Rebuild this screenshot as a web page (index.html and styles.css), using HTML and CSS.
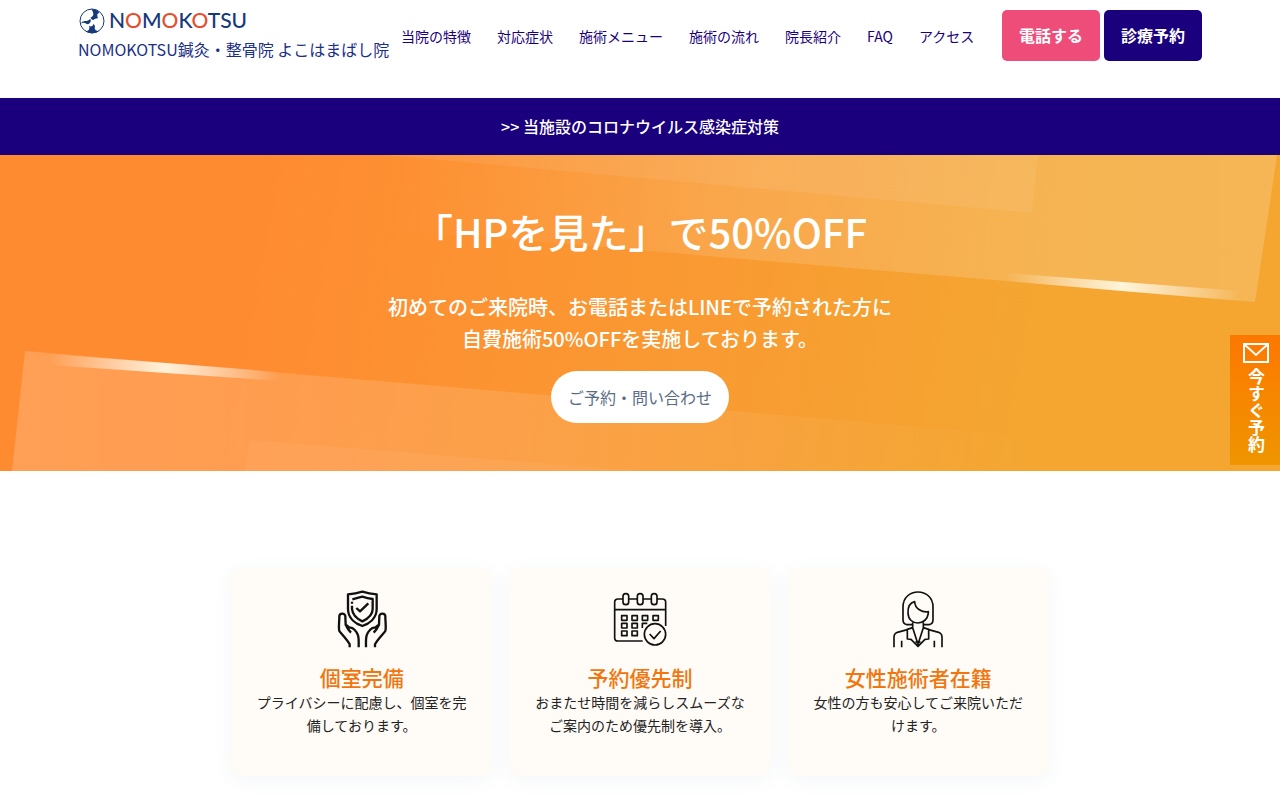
FILE: index.html
```html
<!DOCTYPE html>
<html lang="ja">
<head>
<meta charset="utf-8">
<meta name="viewport" content="width=device-width, initial-scale=1">
<title>NOMOKOTSU鍼灸・整骨院 よこはまばし院</title>
<link rel="stylesheet" href="styles.css">
</head>
<body>
<header class="header">
  <a class="brand" href="#">
    <span class="logo">
      <svg class="logo-mark" viewBox="0 0 78 78" aria-hidden="true">
        <circle cx="39" cy="39" r="36" fill="#fff" stroke="#16397c" stroke-width="3"/>
        <path fill="#16397c" d="M36 4C48 3 58 8 61 15C54 16 53 22 57 30C51 32 46 32 43 36C38 36 35 32 35 28C39 27 43 24 43 19C43 12 40 7 36 4Z"/>
        <path fill="#16397c" d="M5 48C8 42 14 38 20 39C26 40 30 36 33 33C37 35 36 40 33 44C30 48 26 50 22 47C15 43 9 44 5 48Z"/>
        <path fill="#16397c" d="M22 70C30 68 33 62 30 54C36 57 42 55 43 48C49 51 48 57 47 61C48 67 54 70 60 69C48 78 32 77 22 70Z"/>
      </svg>
      <span class="logo-text">N<i>O</i>M<i>O</i>K<i>O</i>TSU</span>
    </span>
    <span class="clinic">NOMOKOTSU鍼灸・整骨院 よこはまばし院</span>
  </a>
  <nav class="nav">
    <a href="#">当院の特徴</a>
    <a href="#">対応症状</a>
    <a href="#">施術メニュー</a>
    <a href="#">施術の流れ</a>
    <a href="#">院長紹介</a>
    <a href="#">FAQ</a>
    <a href="#">アクセス</a>
  </nav>
  <div class="actions">
    <a class="btn btn-tel" href="#">電話する</a>
    <a class="btn btn-book" href="#">診療予約</a>
  </div>
</header>

<a class="notice" href="#">&gt;&gt; 当施設のコロナウイルス感染症対策</a>

<main>
  <section class="hero">
    <svg class="hero-bg" viewBox="0 0 1280 316" preserveAspectRatio="none" aria-hidden="true">
      <defs>
        <linearGradient id="beamRight" gradientUnits="userSpaceOnUse" x1="400" y1="0" x2="1270" y2="0"><stop offset="0" stop-color="#fff" stop-opacity="0"/><stop offset=".4" stop-color="#fff" stop-opacity=".13"/><stop offset="1" stop-color="#fff" stop-opacity=".18"/></linearGradient>
        <linearGradient id="beamLeft"><stop offset="0" stop-color="#fff" stop-opacity=".18"/><stop offset=".5" stop-color="#fff" stop-opacity=".11"/><stop offset="1" stop-color="#fff" stop-opacity="0"/></linearGradient>
        <linearGradient id="glare"><stop offset="0" stop-color="#fff" stop-opacity="0"/><stop offset=".5" stop-color="#fffbe8" stop-opacity=".9"/><stop offset="1" stop-color="#fff" stop-opacity="0"/></linearGradient>
      </defs>
      <polygon fill="url(#beamRight)" points="400,0 1277,0 1255,147 400,75"/>
      <polygon fill="#fff" fill-opacity=".07" points="385,0 1038,0 1032,58"/>
      <polygon fill="url(#glare)" points="1005,118 1240,136 1240,146 1005,126"/>
      <polygon fill="url(#beamLeft)" points="25,196 1040,282 1040,316 12,316"/>
      <polygon fill="#fff" fill-opacity=".05" points="250,285 640,316 244,316"/>
      <polygon fill="url(#glare)" points="50,199 280,217 280,226 50,210"/>
    </svg>
    <h1 class="hero-title">「HPを見た」で50%OFF</h1>
    <p class="hero-lead">初めてのご来院時、お電話またはLINEで予約された方に<br>自費施術50%OFFを実施しております。</p>
    <a class="hero-btn" href="#">ご予約・問い合わせ</a>
  </section>

  <section class="features">
    <article class="card">
      <svg class="icon icon-bold" viewBox="36 29 180 174" aria-hidden="true">
        <path d="M84 42Q107 40 127 34Q147 40 170 42V86C170 114 147 130 127 137C107 130 84 114 84 86Z"/>
        <path d="M97 57Q113 53 127 49Q143 54 158 56V86C158 104 142 116 127 123C112 116 98 106 96 86V76M96 64V70"/>
        <path d="M109 83L120 93L145 69"/>
        <path d="M89 201V192C82 178 61 157 58 152C55 143 58 126 58 108C58 98 76 97 76 108L77 133C81 142 84 148 93 157M77 135C83 133 85 142 90 142C97 140 109 151 114 165C117 174 116 188 116 201"/>
        <path d="M165 201V192C172 178 193 157 196 152C199 143 196 126 196 108C196 98 178 97 178 108L177 133C173 142 170 148 161 157M177 135C171 133 169 142 164 142C157 140 145 151 140 165C137 174 138 188 138 201"/>
      </svg>
      <h2>個室完備</h2>
      <p>プライバシーに配慮し、個室を完備しております。</p>
    </article>
    <article class="card">
      <svg class="icon" viewBox="45 29 180 174" aria-hidden="true">
        <path d="M84 56H69Q59 56 59 66V172Q59 182 69 182H143M102 56H126M144 56H168M186 56H202Q212 56 212 66V137M59 88H212"/>
        <rect x="84" y="40" width="17" height="33" rx="8"/><rect x="127" y="40" width="17" height="33" rx="8"/><rect x="169" y="40" width="17" height="33" rx="8"/>
        <path d="M80 106H96V120H80ZM111 106H127V120H111ZM142 106H158V120H142ZM174 106H190V120H174ZM80 129H96V143H80ZM111 129H127V143H111ZM157 129H142V143M80 152H96V166H80ZM111 152H127V166H111Z"/>
        <circle cx="180" cy="162" r="32"/><path d="M164 161L177 175L197 152"/>
      </svg>
      <h2>予約優先制</h2>
      <p>おまたせ時間を減らしスムーズなご案内のため優先制を導入。</p>
    </article>
    <article class="card">
      <svg class="icon" viewBox="51 29 180 174" aria-hidden="true">
        <path d="M124 133H108Q96 131 96 119V80C96 20 186 20 186 80V119Q186 131 174 133H158"/>
        <path d="M131 64C115 68 110 79 111 98C112 138 168 138 172 98V94C154 97 132 86 131 64Z"/>
        <path d="M125 126V142L141 192L157 142V126M125 142L109 147V176L120 177L141 198L162 177L173 176V147L157 142M134 183L141 189L148 183"/>
        <path d="M109 148L79 156Q69 160 69 171V201M173 148L203 156Q213 160 213 171V201M92 181V201M190 181V201"/>
      </svg>
      <h2>女性施術者在籍</h2>
      <p>女性の方も安心してご来院いただけます。</p>
    </article>
  </section>
</main>

<a class="side-tab" href="#">
  <svg class="mail" viewBox="0 0 26 20" aria-hidden="true"><path d="M1 1H25V19H1ZM1 1L13 12L25 1" fill="none" stroke="#fff" stroke-width="2"/></svg>
  <span>今すぐ予約</span>
</a>
</body>
</html>
```
FILE: styles.css
```css
* {
  box-sizing: border-box;
}

body {
  margin: 0;
  font-family: "Noto Sans CJK JP", sans-serif;
  font-size: 14px;
  color: #222;
  background: #fff;
}

a {
  color: inherit;
  text-decoration: none;
}

h1,
h2,
p {
  margin: 0;
}

.header {
  display: flex;
  align-items: flex-start;
  justify-content: space-between;
  min-height: 98px;
  padding: 8px 78px 0;
  color: #1a007d;
}

.brand {
  display: flex;
  flex-direction: column;
  white-space: nowrap;
}

.logo {
  display: flex;
  align-items: center;
  gap: 4px;
  height: 26px;
  padding-left: 1px;
}

.logo-mark {
  width: 26px;
  height: 26px;
}

.logo-text {
  font: 500 21px/24px Lato, sans-serif;
  height: 26px;
  color: #16397c;
}

.logo-text i {
  font-style: normal;
  color: #e2512f;
}

.clinic {
  font-size: 16px;
  line-height: 30px;
  color: #1b2f86;
}

.nav {
  display: flex;
  gap: 26px;
  padding-top: 16px;
  line-height: 24px;
  white-space: nowrap;
}

.actions {
  display: flex;
  gap: 4px;
  padding: 2px 0 0 16px;
}

.btn {
  padding: 0 17px;
  border-radius: 5px;
  font-size: 16px;
  font-weight: 700;
  line-height: 51px;
  color: #fff;
  white-space: nowrap;
}

.btn-tel {
  background: #ee4d7a;
}

.btn-book {
  background: #1a007d;
}

.notice {
  display: block;
  padding: 16px;
  background: #1a007d;
  color: #fff;
  font-size: 16px;
  font-weight: 500;
  line-height: 25px;
  text-align: center;
}

.hero {
  position: relative;
  display: flex;
  flex-direction: column;
  align-items: center;
  padding: 48px 16px;
  background: linear-gradient(100deg, #ff8b31 20%, #fa9832 50%, #f4a631 80%);
  color: #fff;
  text-align: center;
}

.hero-bg {
  position: absolute;
  inset: 0;
  width: 100%;
  height: 100%;
}

.hero-title,
.hero-lead,
.hero-btn {
  position: relative;
}

.hero-title {
  font-size: 40px;
  font-weight: 500;
  line-height: 56px;
}

.hero-lead {
  margin-top: 32px;
  font-size: 20px;
  font-weight: 500;
  line-height: 32px;
}

.hero-btn {
  margin-top: 16px;
  padding: 0 17px;
  border-radius: 26px;
  background: #fff;
  color: #5a6b85;
  font-size: 16px;
  line-height: 52px;
}

.features {
  display: grid;
  grid-template-columns: repeat(3, 1fr);
  gap: 17px;
  max-width: 818px;
  margin: 97px auto 48px;
}

.card {
  display: flex;
  flex-direction: column;
  align-items: center;
  min-height: 208px;
  padding: 22px 24px;
  border-radius: 10px;
  background: #fffbf6;
  box-shadow: 0 4px 20px rgba(60, 100, 140, 0.06);
  text-align: center;
}

.icon {
  width: 60px;
  height: 58px;
  fill: none;
  stroke: #111;
  stroke-width: 5;
  stroke-linejoin: round;
}

.icon-bold {
  stroke-width: 7;
}

.card h2 {
  margin-top: 16px;
  font-size: 21px;
  font-weight: 500;
  line-height: 27px;
  color: #f0760f;
}

.card p {
  line-height: 23px;
}

.side-tab {
  position: fixed;
  top: 335px;
  right: 0;
  display: flex;
  flex-direction: column;
  align-items: center;
  gap: 5px;
  width: 50px;
  height: 130px;
  padding: 8px 0 0 2px;
  background: linear-gradient(#fd7800, #ef9500);
  color: #fff;
  font-size: 17px;
  font-weight: 700;
  line-height: 24px;
}

.side-tab span {
  writing-mode: vertical-rl;
}

.mail {
  width: 26px;
  height: 20px;
}
```
